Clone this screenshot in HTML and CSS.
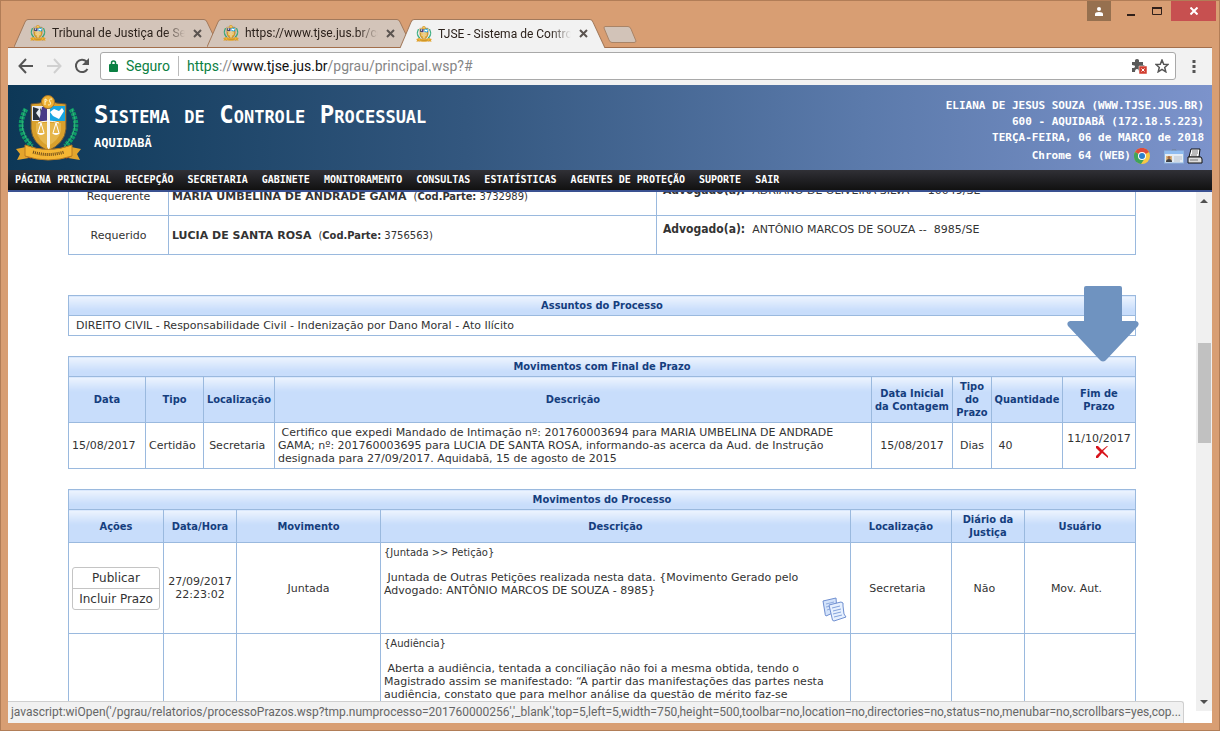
FILE: index.html
```
<!DOCTYPE html>
<html lang="pt-br">
<head>
    <meta charset="UTF-8">
    <meta name="viewport" content="width=device-width, initial-scale=1.0">
    <title>TJSE - Sistema de Controle Processual</title>
    <link rel="stylesheet" href="styles.css">
</head>
<body>
    <!-- símbolos reutilizados -->
    <svg class="defs" width="0" height="0" aria-hidden="true">
        <symbol id="brasao" viewBox="0 0 65 66">
            <g fill="none" stroke="#0d9a66" stroke-width="5" stroke-dasharray="3 1"><path d="M10 14Q-2 35 16 51"/><path d="M55 14Q67 35 49 51"/></g>
            <g fill="none" stroke="#35b37c" stroke-width="1"><path d="M9 14Q0 35 17 52"/><path d="M56 14Q65 35 48 52"/></g>
            <path d="M15 9Q24 9 32 5Q40 9 50 9V34Q49 48 32 56Q16 48 15 34Z" fill="#d9a02c" stroke="#6d5636"/>
            <path d="M16 11H32V26H16Z" fill="#e8ecf2"/>
            <path d="M17 12l6 2-3 4 5 7h-8zM24 13l3 4-2 3z" fill="#28303c"/>
            <path d="M26 12h6v14h-9z" fill="#473a86"/>
            <path d="M32 11H49V26H32Z" fill="#18a5e0"/>
            <path d="M38 14l5 2 3-3 2 3-5 8-6-3-3-4z" fill="#fff"/>
            <path d="M20 28H45V36Q42 46 32 51Q23 46 20 36Z" fill="#e6b64b"/>
            <path d="M31 14h3v38l-1 3-2-3z" fill="#f7f5ef"/>
            <path d="M22 28Q32 24 43 28M25 28l-3 10M25 28l3 10M40 28l-3 10M40 28l3 10" fill="none" stroke="#fff"/>
            <path d="M21 38h8q-4 4-8 0zM36 38h8q-4 4-8 0z" fill="#fff"/>
            <circle cx="32" cy="7" r="6.500" fill="#eeb032" stroke="#a87427"/>
            <path d="M29 4v6M29 4q4 1 0 3M36 4q-4 0-2 3t-2 3" fill="none" stroke="#fff6cf" stroke-width="1"/>
            <path d="M10 52L0 54l4 5-3 6 12-2zM55 52l10 2-4 5 3 6-12-2z" fill="#e3a52c"/>
            <path d="M9 61l6-1v4zM56 61l-6-1v4z" fill="#8c3a26"/>
            <path d="M9 50Q32 59 56 50V61Q32 69 9 61Z" fill="#f5b633" stroke="#ba7c20"/>
            <path d="M17 57Q32 62 48 57" fill="none" stroke="#6c4a1a" stroke-width="3" stroke-dasharray="1 1"/>
        </symbol>
        <symbol id="aba" viewBox="0 0 205 28" preserveAspectRatio="none">
            <path d="M0 28L11 3Q12 .5 14 .5H190Q192 .5 193 3L205 28"/>
        </symbol>
        <symbol id="fechar" viewBox="0 0 9 9"><path d="M1 1l7 7M8 1l-7 7" fill="none" stroke="#5b5450" stroke-width="2"/></symbol>
    </svg>

    <div class="janela">
        <div class="abas">
            <div class="aba">
                <svg class="fundo"><use href="#aba"/></svg>
                <svg class="favicon"><use href="#brasao"/></svg>
                <span class="nome">Tribunal de Justiça de Se</span>
                <button class="x" aria-label="Fechar"><svg><use href="#fechar"/></svg></button>
            </div>
            <div class="aba">
                <svg class="fundo"><use href="#aba"/></svg>
                <svg class="favicon"><use href="#brasao"/></svg>
                <span class="nome">https://www.tjse.jus.br/co</span>
                <button class="x" aria-label="Fechar"><svg><use href="#fechar"/></svg></button>
            </div>
            <div class="aba ativa">
                <svg class="fundo"><use href="#aba"/></svg>
                <svg class="favicon"><use href="#brasao"/></svg>
                <span class="nome">TJSE - Sistema de Contro</span>
                <button class="x" aria-label="Fechar"><svg><use href="#fechar"/></svg></button>
            </div>
            <button class="nova" aria-label="Nova guia">
                <svg width="34" height="18" viewBox="0 0 34 18"><path d="M2 .5H25Q27 .5 28 3L33 15Q33 16.500 31 16.500H9Q7 16.500 6 14L1 2Q1 .5 2 .5Z" fill="#d2c3b8" stroke="#a98467"/></svg>
            </button>
            <div class="controles">
                <button class="usuario" aria-label="Usuário"><svg width="10" height="9" viewBox="0 0 10 9"><circle cx="5" cy="2" r="2" fill="#fff"/><path d="M1 9V7Q1 5 5 5T9 7V9Z" fill="#fff"/></svg></button>
                <button class="min" aria-label="Minimizar"><svg width="8" height="10"><path d="M0 8h8v2H0z" fill="#30201a"/></svg></button>
                <button class="max" aria-label="Maximizar"><svg width="10" height="8"><path d="M.5 1H9.500V7.500H.5Z" fill="none" stroke="#30201a"/><path d="M0 0h10v2H0z" fill="#30201a"/></svg></button>
                <button class="sair" aria-label="Fechar janela"><svg width="8" height="8"><path d="M.5 .5l7 7M7.500 .5l-7 7" stroke="#fff" stroke-width="2"/></svg></button>
            </div>
        </div>

        <div class="barra">
            <button aria-label="Voltar"><svg width="16" height="16" viewBox="0 0 16 16"><path d="M15 8H2M8 1L1.500 8 8 15" fill="none" stroke="#555" stroke-width="2"/></svg></button>
            <button aria-label="Avançar"><svg width="16" height="16" viewBox="0 0 16 16"><path d="M1 8H14M8 1l6.500 7L8 15" fill="none" stroke="#d0d0d0" stroke-width="2"/></svg></button>
            <button aria-label="Recarregar"><svg width="16" height="16" viewBox="0 0 16 16"><path d="M13.500 11A6.200 6.200 0 1 1 12.500 3.500" fill="none" stroke="#555" stroke-width="2"/><path d="M15 0V7H8Z" fill="#555"/></svg></button>
            <div class="endereco">
                <svg width="9" height="12" viewBox="0 0 9 12"><path d="M2.500 5V3a2 2 0 0 1 4 0V5" fill="none" stroke="#0b8043" stroke-width="1.500"/><rect y="4" width="9" height="8" rx="1" fill="#0b8043"/></svg>
                <span class="seguro">Seguro</span>
                <span class="url"><i>https</i>://<b>www.tjse.jus.br</b>/pgrau/principal.wsp?#</span>
                <svg width="16" height="16" viewBox="0 0 16 16"><path d="M1 4H4Q3.500 1 6 1T8 4H12V7Q14 7 14 9T12 11V14H8Q8 11 6 11T4 14H1V10Q4 10 4 8.500T1 7Z" fill="#595959"/><path d="M8 8h8v8H8z" fill="#d23f31" stroke="#fff" stroke-width=".5"/><path d="M10.500 10.500l3 3M13.500 10.500l-3 3" stroke="#fff"/></svg>
                <svg width="14" height="14" viewBox="0 0 14 14"><path d="M7 1L8.700 5.200 13 5.500 9.700 8.400 10.800 12.800 7 10.400 3.200 12.800 4.300 8.400 1 5.500 5.300 5.200Z" fill="none" stroke="#555" stroke-width="1.500"/></svg>
            </div>
            <button class="mais" aria-label="Menu"><svg width="4" height="14"><path d="M.5 1h3v3h-3zM.5 6h3v3h-3zM.5 11h3v3h-3z" fill="#555"/></svg></button>
        </div>

        <div class="pagina">
            <div class="topo">
                <svg class="logo"><use href="#brasao"/></svg>
                <div class="titulo">
                    <h1>Sistema de Controle Processual</h1>
                    <p>AQUIDABÃ</p>
                </div>
                <div class="info">
                    <p>ELIANA DE JESUS SOUZA (WWW.TJSE.JUS.BR)</p>
                    <p>600 - AQUIDABÃ (172.18.5.223)</p>
                    <p>TERÇA-FEIRA, 06 de MARÇO de 2018</p>
                    <p class="nav">Chrome 64 (WEB)
                        <svg width="16" height="16" viewBox="0 0 16 16"><circle cx="8" cy="8" r="8" fill="#f7c844"/><path d="M8 8L1 4A8 8 0 0 1 15 4Z" fill="#df4c3c"/><path d="M8 8L1 4A8 8 0 0 0 7 16L11 10Z" fill="#3fa45a"/><circle cx="8" cy="8" r="4" fill="#fff"/><circle cx="8" cy="8" r="3" fill="#2a80ce"/></svg>
                        <svg class="cracha" width="20" height="15" viewBox="0 0 20 15"><path d="M8 3V1h4v2" fill="none" stroke="#6f7c8c"/><rect x=".5" y="2" width="19" height="12" fill="#e4ecf4" stroke="#8fb5e0"/><path d="M1 2h18v3H1z" fill="#8fbcf0"/><path d="M2 7h6v6H2z" fill="#d8b27c"/><path d="M2 13Q2 10 5 10T8 13Z" fill="#3d4046"/><circle cx="5" cy="8.500" r="1.500" fill="#a06840"/><path d="M10 8h8M10 10h8M10 12h6" stroke="#b9c2cc"/></svg>
                        <svg width="16" height="16" viewBox="0 0 16 16"><path d="M4 1H13L12 9H2Z" fill="#fff" stroke="#111"/><path d="M1 9H14L15 11V15H1Z" fill="#ddd" stroke="#111"/><path d="M5 3h6M5 5h6M4 7h6M3 12h8" stroke="#777"/></svg>
                    </p>
                </div>
            </div>
            <nav class="menu">
                <a href="#">PÁGINA PRINCIPAL</a>
                <a href="#">RECEPÇÃO</a>
                <a href="#">SECRETARIA</a>
                <a href="#">GABINETE</a>
                <a href="#">MONITORAMENTO</a>
                <a href="#">CONSULTAS</a>
                <a href="#">ESTATÍSTICAS</a>
                <a href="#">AGENTES DE PROTEÇÃO</a>
                <a href="#">SUPORTE</a>
                <a href="#">SAIR</a>
            </nav>

            <div class="corpo">
                <div class="conteudo">
                    <table class="partes">
                        <colgroup><col class="w100"><col><col class="w479"></colgroup>
                        <tr>
                            <td class="c">Requerente</td>
                            <td><strong>MARIA UMBELINA DE ANDRADE GAMA</strong>&nbsp; <small>(<b>Cod.Parte:</b> 3732989)</small></td>
                            <td class="adv"><b>Advogado(a):</b>&nbsp; ADRIANO DE OLIVEIRA SILVA -- &nbsp;10049/SE</td>
                        </tr>
                        <tr>
                            <td class="c">Requerido</td>
                            <td><strong>LUCIA DE SANTA ROSA</strong>&nbsp; <small>(<b>Cod.Parte:</b> 3756563)</small></td>
                            <td class="adv"><b>Advogado(a):</b>&nbsp; ANTÔNIO MARCOS DE SOUZA -- &nbsp;8985/SE</td>
                        </tr>
                    </table>

                    <div class="assuntos">
                        <table>
                            <tr><th>Assuntos do Processo</th></tr>
                            <tr><td class="assunto">DIREITO CIVIL - Responsabilidade Civil - Indenização por Dano Moral - Ato Ilícito</td></tr>
                        </table>
                        <svg class="seta" width="72" height="76" viewBox="0 0 72 76"><path d="M19 0H53Q55 0 55 2V35H69Q73 36 71 40L40 73Q36 78 32 73L1 40Q-1 36 3 35H17V2Q17 0 19 0Z" fill="#6f93c0"/></svg>
                    </div>

                    <table class="prazos">
                        <colgroup><col class="w77"><col class="w58"><col class="w71"><col><col class="w81"><col class="w39"><col class="w71"><col class="w73"></colgroup>
                        <tr><th colspan="8">Movimentos com Final de Prazo</th></tr>
                        <tr class="cab">
                            <th>Data</th><th>Tipo</th><th>Localização</th><th>Descrição</th>
                            <th>Data Inicial da Contagem</th><th>Tipo do Prazo</th><th>Quantidade</th><th>Fim de<br>Prazo</th>
                        </tr>
                        <tr class="dados">
                            <td>15/08/2017</td>
                            <td>Certidão</td>
                            <td class="c">Secretaria&nbsp;</td>
                            <td>&nbsp;Certifico que expedi Mandado de Intimação nº: 201760003694 para MARIA UMBELINA DE ANDRADE GAMA; nº: 201760003695 para LUCIA DE SANTA ROSA, informando-as acerca da Aud. de Instrução designada para 27/09/2017. Aquidabã, 15 de agosto de 2015</td>
                            <td class="c">15/08/2017</td>
                            <td class="c">Dias</td>
                            <td>&nbsp;40</td>
                            <td class="c fim">11/10/2017
                                <a href="#" aria-label="Excluir"><svg width="14" height="14" viewBox="0 0 14 14"><path d="M1 1L3 1 7 5 12 1 13 1 8 6 13 11 13 13 7 8 3 13 1 13 1 11 5 7 1 3Z" fill="#d8141c"/></svg></a>
                            </td>
                        </tr>
                    </table>

                    <table class="movimentos">
                        <colgroup><col class="w95"><col class="w73"><col class="w144"><col><col class="w101"><col class="w73"><col class="w111"></colgroup>
                        <tr><th colspan="7">Movimentos do Processo</th></tr>
                        <tr class="cab">
                            <th>Ações</th><th>Data/Hora</th><th>Movimento</th><th>Descrição</th><th>Localização</th><th>Diário da Justiça</th><th>Usuário</th>
                        </tr>
                        <tr class="dados">
                            <td>
                                <div class="acoes">
                                    <button>Publicar</button>
                                    <button>Incluir Prazo</button>
                                </div>
                            </td>
                            <td class="c">27/09/2017 22:23:02</td>
                            <td class="c">Juntada</td>
                            <td class="desc">
                                <small>{Juntada &gt;&gt; Petição}</small>
                                <p>&nbsp;Juntada de Outras Petições realizada nesta data. {Movimento Gerado pelo Advogado: ANTÔNIO MARCOS DE SOUZA - 8985}</p>
                                <a href="#" aria-label="Documentos"><svg width="25" height="25" viewBox="0 0 25 25"><path d="M1 4L14 1 15 14 4 19Q3 18 3 16Z" fill="#d2e2fa" stroke="#6f8fd0"/><path d="M4 7l8-2M4 10l5-1M5 13l3-1" stroke="#8fabdf"/><path d="M7 8L19 5Q22 5 21 9L22 17 24 20 12 24Q10 24 10 21Z" fill="#e6f0fe" stroke="#6f8fd0"/><path d="M10 11l8-2M11 14l8-2M11 17l8-2M12 20l8-2" stroke="#84a3dc"/></svg></a>
                            </td>
                            <td class="c">Secretaria&nbsp;&nbsp;</td>
                            <td class="c">Não&nbsp;&nbsp;</td>
                            <td class="c">Mov. Aut.&nbsp;&nbsp;</td>
                        </tr>
                        <tr class="dados">
                            <td></td>
                            <td></td>
                            <td></td>
                            <td class="desc">
                                <small>{Audiência}</small>
                                <p>&nbsp;Aberta a audiência, tentada a conciliação não foi a mesma obtida, tendo o Magistrado assim se manifestado: “A partir das manifestações das partes nesta audiência, constato que para melhor análise da questão de mérito faz-se</p>
                            </td>
                            <td></td>
                            <td></td>
                            <td></td>
                        </tr>
                    </table>
                </div>
                <div class="rolagem">
                    <svg width="8" height="4"><path d="M0 4L4 0 8 4Z" fill="#505050"/></svg>
                    <div class="trilho"><div class="polegar"></div></div>
                    <svg width="8" height="4"><path d="M0 0H8L4 4Z" fill="#505050"/></svg>
                </div>
                <div class="status">javascript:wiOpen('/pgrau/relatorios/processoPrazos.wsp?tmp.numprocesso=201760000256','_blank','top=5,left=5,width=750,height=500,toolbar=no,location=no,directories=no,status=no,menubar=no,scrollbars=yes,cop...</div>
            </div>
        </div>
    </div>
</body>
</html>
```

FILE: styles.css
```
* { box-sizing:border-box; }
body { margin:0; font-family:"DejaVu Sans", Verdana, sans-serif; font-size:11px; line-height:13px; color:#333; }
button { border:0; padding:0; background:none; font-family:inherit; }
p, h1 { margin:0; }
a { text-decoration:none; }
svg { display:block; flex:none; }
.defs { position:absolute; }

/* janela do navegador */
.janela { display:flex; flex-direction:column; height:100vh; padding:0 7px 7px; background:#d89e73; border:1px solid #b17d57; overflow:hidden; }
.abas { display:flex; align-items:flex-end; height:47px; flex:none; padding-left:6px; border-bottom:1px solid #a36f4c; font-family:Roboto, "Segoe UI", sans-serif; }
.aba { position:relative; display:flex; align-items:center; width:205px; height:28px; padding:0 17px 0 16px; margin-right:-12px; }
.aba .fundo { position:absolute; left:0; top:0; width:100%; height:100%; fill:#d3c4b9; stroke:#a2795b; }
.aba.ativa { z-index:1; margin-bottom:-1px; height:29px; }
.aba.ativa .fundo { fill:#f2f2f2; }
.favicon { position:relative; width:16px; height:16px; margin-right:6px; }
.nome { position:relative; flex:1; font-size:12px; line-height:16px; color:#2c221c; white-space:nowrap; overflow:hidden;
    -webkit-mask-image:linear-gradient(90deg, #000 85%, transparent); mask-image:linear-gradient(90deg, #000 85%, transparent); }
.x { position:relative; margin-left:8px; }
.x svg { width:9px; height:9px; }
.nova { margin:0 0 3px 10px; }
.controles { display:flex; align-self:flex-start; margin-left:auto; margin-right:-4px; }
.controles button { display:flex; align-items:center; justify-content:center; height:20px; width:26px; }
.controles .usuario { width:24px; background:#96704f; margin-right:7px; }
.controles .sair { width:45px; background:#c75050; margin-left:1px; }

.barra { display:flex; align-items:center; flex:none; height:37px; padding:0 16px 1px 10px; gap:12px; background:#f2f2f2; font-family:Roboto, "Segoe UI", sans-serif; }
.endereco { flex:1; display:flex; align-items:center; height:28px; margin-left:-2px; padding:0 6px 0 8px; gap:8px; background:#fff; border:1px solid #a9a9a9; border-radius:3px; font-size:14px; line-height:20px; color:#868686; }
.endereco .seguro { padding-right:8px; border-right:1px solid #bbb; color:#0b8043; }
.endereco .url { flex:1; }
.endereco i { font-style:normal; color:#0b8043; }
.endereco b { font-weight:normal; color:#111; }
.mais { margin-left:4px; }

/* cabeçalho */
.pagina { flex:1; display:flex; flex-direction:column; min-height:0; background:#fff; }
.topo { display:flex; flex:none; height:85px; padding:10px 8px 0; color:#fff; font-family:"DejaVu Sans Mono", Consolas, monospace; font-weight:bold;
    background:linear-gradient(90deg, #0d3857, #33577f 38%, #5b7aab 71%, #7c93cb); }
.logo { width:65px; height:66px; margin-right:13px; }
.titulo { flex:1; }
h1 { font-size:24px; line-height:30px; margin-top:5px; font-variant:small-caps; color:#fff; }
.titulo p { font-size:12px; line-height:16px; margin-top:5px; }
.info { text-align:right; line-height:16px; padding-top:3px; }
.nav { display:flex; align-items:center; justify-content:flex-end; gap:3px; height:20px; margin-right:1px; }
.cracha { margin-left:11px; }
.menu { display:flex; flex:none; gap:14px; height:22px; padding-left:7px; border-bottom:2px solid #3a5191; background:linear-gradient(#303036, #111); }
.menu a { color:#fff; font:bold 10px/19px "DejaVu Sans Mono", Consolas, monospace; }

/* conteúdo */
.corpo { position:relative; flex:1; display:flex; min-height:0; overflow:hidden; }
.conteudo { flex:1; padding:0 60px; }
.rolagem { display:flex; flex-direction:column; align-items:center; width:16px; height:calc(100% - 12px); padding:7px 0; background:#f0f0f0; }
.trilho { flex:1; padding-top:140px; }
.polegar { width:13px; height:100px; background:#c1c1c1; }

table { width:100%; border-collapse:collapse; table-layout:fixed; margin-bottom:20px; }
th, td { border:1px solid #9ab9de; padding:0 3px; text-align:left; }
th { height:20px; text-align:center; color:#153e7e; font-family:"DejaVu Sans Condensed", Tahoma, sans-serif; background:linear-gradient(#edf4fe, #c8ddfb 14px, #c8ddfb); }
.c { text-align:center; }
small { font-size:10px; }
.partes { margin:-16px 0 40px; }
.partes td { height:39px; }
.partes b { font-family:"DejaVu Sans Condensed", Tahoma, sans-serif; font-size:11px; }
.partes .adv { padding:0 6px 12px; }
.partes .adv b { font-size:12px; }
.assuntos { position:relative; }
.assunto { height:20px; padding-left:7px; }
.seta { position:absolute; right:-3px; top:-9px; }
.prazos .cab th, .prazos .dados td { height:46px; }
.cab th { padding:0; }
.fim svg { margin:0 auto; }
.fim a { display:block; padding-left:6px; }
.movimentos .cab th { height:33px; }
.movimentos .dados td { height:91px; }
.dados .desc { vertical-align:top; padding-top:3px; }
.desc p { margin-top:12px; }
.desc svg { margin-left:auto; }
.acoes { border:1px solid #c4c4c4; border-radius:3px; }
.acoes button { display:block; width:100%; height:20px; font-size:12px; color:#333; white-space:nowrap; }
.acoes button + button { height:21px; border-top:1px solid #c4c4c4; }

.w39 { width:39px; }
.w58 { width:58px; }
.w71 { width:71px; }
.w73 { width:73px; }
.w77 { width:77px; }
.w81 { width:81px; }
.w95 { width:95px; }
.w100 { width:100px; }
.w101 { width:101px; }
.w111 { width:111px; }
.w144 { width:144px; }
.w479 { width:479px; }

.status { position:absolute; left:0; bottom:0; max-width:calc(100% - 24px); height:22px; padding:0 2px 0 3px; overflow:hidden; background:#f1f1f1; border:1px solid #cfcfcf; border-width:1px 1px 0 0; border-radius:0 3px 0 0;
    font:12px/21px Roboto, "Segoe UI", sans-serif; color:#666; white-space:nowrap; }
```
